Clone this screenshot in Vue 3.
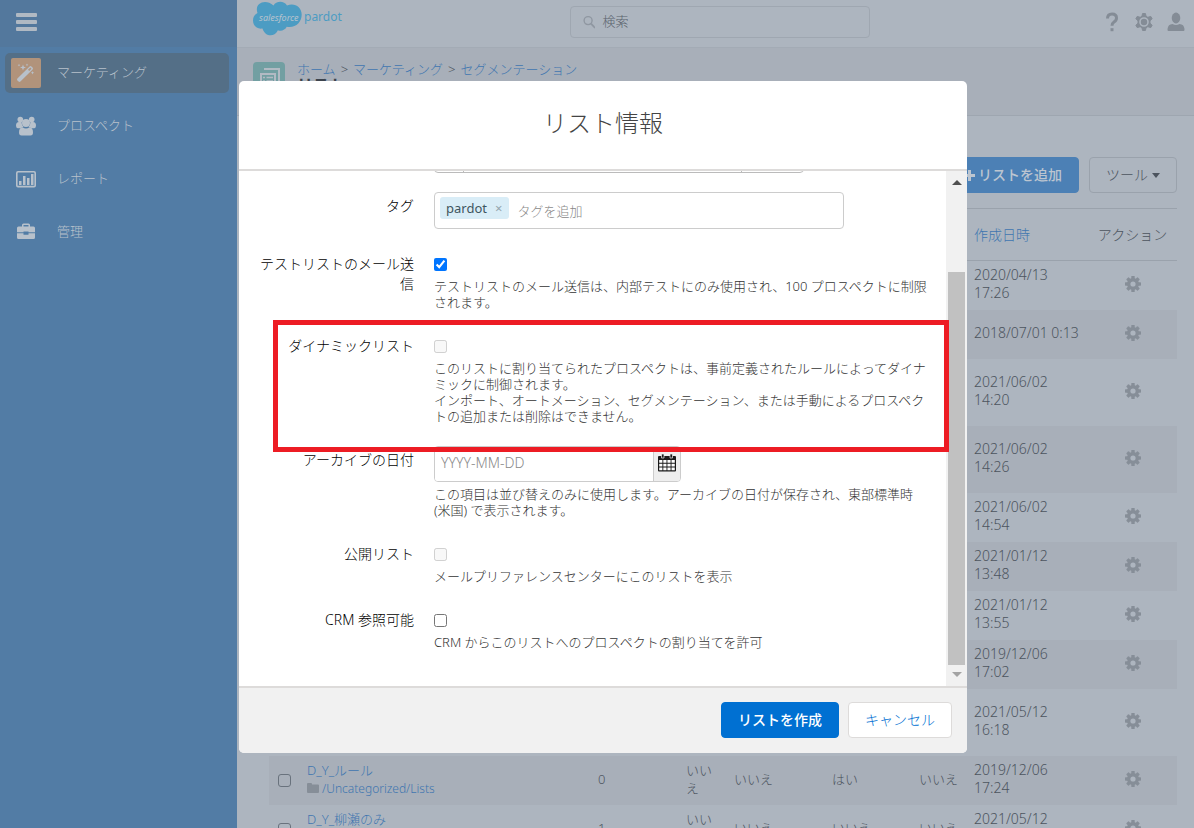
<script setup>
import { ref } from 'vue'

const menu = [
  { icon: 'wand', label: 'マーケティング', active: true },
  { icon: 'people', label: 'プロスペクト' },
  { icon: 'chart', label: 'レポート' },
  { icon: 'case', label: '管理' },
]

const rows = [
  { date: '2020/04/13 17:26' },
  { date: '2018/07/01 0:13' },
  { date: '2021/06/02 14:20', tall: true },
  { date: '2021/06/02 14:26', tall: true },
  { date: '2021/06/02 14:54' },
  { date: '2021/01/12 13:48' },
  { date: '2021/01/12 13:55' },
  { date: '2019/12/06 17:02' },
  { date: '2021/05/12 16:18', tall: true },
  { name: 'D_Y_ルール', count: 0, flags: ['いいえ', 'いいえ', 'はい', 'いいえ'], date: '2019/12/06 17:24' },
  { name: 'D_Y_柳瀬のみ', count: 1, flags: ['いいえ', 'いいえ', 'いいえ', 'いいえ'], date: '2021/05/12 16:20' },
]

const emailTest = ref(true)
const crmVisible = ref(false)
</script>

<template>
  <div class="app">
    <nav class="side">
      <div class="side-top">
        <button class="plain burger" aria-label="メニュー"><i></i><i></i><i></i></button>
      </div>
      <ul class="menu">
        <li v-for="m in menu" :key="m.icon">
          <a href="#" :class="{ active: m.active }">
            <span class="tile">
              <svg v-if="m.icon === 'wand'" width="20" height="20" viewBox="0 0 20 20" fill="currentColor">
                <path d="M1.4 15.6 13.6 3.4q.9-.8 1.8 0l1.2 1.2q.8.9 0 1.8L4.4 18.6q-.9.8-1.8 0l-1.2-1.2q-.8-.9 0-1.8z" />
                <path d="m12 6.8 2.3-2.3 1.2 1.2L13.200 8z" fill="#b1937b" />
                <path d="m7 1.500 .8 2.200 2.200.8-2.200.8L7 7.500l-.8-2.200L4 4.500l2.200-.8zM3 .8l.4 1 1 .4-1 .4-.4 1-.4-1-1-.4 1-.4zM11 .5l.4 1 1 .4-1 .4-.4 1-.4-1-1-.4 1-.4zM16.500 8l.5 1.200 1.200.5-1.200.5-.5 1.200-.5-1.200-1.200-.5 1.200-.5z" />
              </svg>
              <svg v-else-if="m.icon === 'people'" width="20" height="20" viewBox="0 0 20 20" fill="currentColor">
                <circle cx="4.300" cy="3.600" r="2.800" /><circle cx="15.700" cy="3.600" r="2.800" />
                <path d="M0 9.500Q0 6 3 6h2.500q.2 3.600 2 4.900-1.800.2-2.700 1.400H1.600Q0 12 0 9.500zM20 9.500Q20 6 17 6h-2.500q-.2 3.600-2 4.900 1.800.2 2.700 1.400h3.200Q20 12 20 9.500z" />
                <circle cx="10" cy="7" r="4" />
                <path d="M3 16.500q0-5 3.500-5.300Q10 13.600 13.500 11.200q3.500.3 3.500 5.300 0 3-2.500 3h-9q-2.500 0-2.500-3z" />
              </svg>
              <svg v-else-if="m.icon === 'chart'" width="20" height="20" viewBox="0 0 20 20" fill="currentColor">
                <rect x=".8" y="2.800" width="18.400" height="14.800" rx="1.200" fill="none" stroke="currentColor" stroke-width="1.600" />
                <path d="M3 12h2.500v4H3zM7 7h2.500v9H7zM11 9h2.500v7H11zM15 5h2.500v11H15z" />
              </svg>
              <svg v-else width="20" height="20" viewBox="0 0 20 20" fill="currentColor">
                <path d="M6 4.500V3q0-1.500 1.500-1.500h5Q14 1.500 14 3v1.500h3.500Q19 4.500 19 6v4.200h-6.500V9.500h-5v.7H1V6q0-1.500 1.500-1.500zM7.500 3v1.500h5V3z" />
                <path d="M1 11.200h6.500v1.500h5v-1.500H19v4.300q0 1.500-1.500 1.500h-15Q1 17 1 15.500z" />
              </svg>
            </span>
            <span class="name">{{ m.label }}</span>
          </a>
        </li>
      </ul>
    </nav>

    <main class="main">
      <header class="topbar">
        <a href="#" class="brand" aria-label="salesforce pardot">
          <svg width="90" height="38" viewBox="0 0 90 38">
            <path d="M20.500 5.500C23 .8 31 .3 34 5.500c7-3.300 14.700 1.200 14.700 9 0 8-6.500 14-15 12.300-1.500 3.200-5.500 4.800-8.800 3.400C22.500 36.500 12.500 38 9.500 28.500 4 29.500 0 25.500 0 20.500c0-3.400 1.600-6 4.500-7.500C1 3.500 12-1.800 20.500 5.500z" fill="#4c9cc3" />
            <text x="6" y="21" class="cloud-text">salesforce</text>
            <text x="51" y="21" class="pardot-text">pardot</text>
          </svg>
        </a>
        <label class="search">
          <svg width="14" height="14" viewBox="0 0 14 14" fill="none" stroke="#8f97a1" stroke-width="1.500"><circle cx="5.500" cy="5.500" r="4.300" /><path d="m8.600 8.800 4.400 4.500" stroke-width="2" /></svg>
          <input type="text" placeholder="検索" aria-label="検索" />
        </label>
        <div class="tools">
          <button class="plain" aria-label="ヘルプ">
            <svg width="20" height="20" viewBox="0 0 20 20" fill="none" stroke="currentColor" stroke-width="3"><path d="M5.500 6.500Q5.500 2 10 2t4.500 4q0 2.400-2.500 4-2 1.300-2 3.800" /><path d="M8.500 16.200h3v3h-3z" fill="currentColor" stroke="none" /></svg>
          </button>
          <button class="plain" aria-label="設定">
            <svg width="20" height="20" viewBox="0 0 20 20" fill="none" stroke="currentColor"><path d="M8.600 1.500h2.800l.7 2.800 1.700 1 3-.9 1.300 2.300-2.100 2.200v2.200l2.100 2.200-1.300 2.300-3-.9-1.700 1-.7 2.800H8.600l-.7-2.800-1.700-1-3 .9-1.300-2.300L4 11.100V8.900L1.900 6.700l1.300-2.300 3 .9 1.700-1z" stroke-width="1" fill="currentColor" /><circle cx="10" cy="10" r="4" stroke="#adb5bf" stroke-width="1.600" /></svg>
          </button>
          <button class="plain" aria-label="ユーザー">
            <svg width="20" height="20" viewBox="0 0 20 20" fill="currentColor"><ellipse cx="10" cy="6" rx="4.300" ry="5.400" /><path d="M2.300 19q-1-.1-.8-2 .5-4.800 5-5 3.500 1.800 7 0 4.500.2 5 5 .2 1.900-.8 2z" /></svg>
          </button>
        </div>
      </header>

      <section class="page-head">
        <span class="list-icon">
          <svg width="32" height="32" viewBox="0 0 32 32" fill="none" stroke="#b2bac3" stroke-width="2"><path d="M12 8V7h14v16h-2" /><rect x="8" y="12" width="14" height="14" /><path d="M10 15.500h2m1.500 0H20M10 19h2m1.500 0H20M10 22.500h2m1.500 0H20" stroke-width="1.500" /></svg>
        </span>
        <div>
          <p class="crumbs"><a href="#">ホーム</a><span>&gt;</span><a href="#">マーケティング</a><span>&gt;</span><a href="#">セグメンテーション</a></p>
          <h1>リスト</h1>
        </div>
      </section>

      <section class="content">
        <div class="actions">
          <button class="add">
            <svg width="11" height="11" viewBox="0 0 11 11" fill="currentColor"><path d="M4 0h3v4h4v3H7v4H4V7H0V4h4z" /></svg>リストを追加
          </button>
          <button class="tool">ツール<i class="caret"></i></button>
        </div>
        <table>
          <colgroup>
            <col class="c-check" /><col /><col class="c-count" /><col class="c-a" /><col class="c-b" /><col class="c-c" /><col class="c-d" /><col class="c-date" /><col class="c-act" />
          </colgroup>
          <thead>
            <tr><th colspan="7"></th><th><a href="#">作成日時</a></th><th class="act">アクション</th></tr>
          </thead>
          <tbody>
            <tr v-for="(r, i) in rows" :key="i" :class="{ tall: r.tall }">
              <td class="check"><input type="checkbox" aria-label="行を選択" /></td>
              <td>
                <template v-if="r.name">
                  <a href="#">{{ r.name }}</a><br />
                  <a href="#" class="path"><svg width="12" height="10" viewBox="0 0 12 10" fill="#868e98"><path d="M0 1q0-1 1-1h3q1 0 1 1v.5h6q1 0 1 1V9q0 1-1 1H1Q0 10 0 9z" /></svg> /Uncategorized/Lists</a>
                </template>
              </td>
              <td>{{ r.count }}</td>
              <td v-for="n in 4" :key="n">{{ r.flags ? r.flags[n - 1] : '' }}</td>
              <td class="date">{{ r.date }}</td>
              <td class="act">
                <button class="plain gear" aria-label="アクション">
                  <svg width="16" height="16" viewBox="0 0 16 16"><g fill="currentColor"><circle cx="8" cy="8" r="6" /><rect v-for="a in 4" :key="a" x="6.300" y="0" width="3.400" height="16" rx=".6" :transform="`rotate(${a * 45} 8 8)`" /></g><circle class="hub" cx="8" cy="8" r="2.600" /></svg>
                </button>
              </td>
            </tr>
          </tbody>
        </table>
      </section>
    </main>

    <div class="overlay">
      <div class="modal" role="dialog" aria-labelledby="dlg-title">
        <header class="modal-head"><h2 id="dlg-title">リスト情報</h2></header>
        <div class="modal-body">
          <form class="form" @submit.prevent>
            <div class="row folder-row">
              <span></span>
              <div class="folder"><span></span><input type="text" aria-label="フォルダー" /><button type="button" aria-label="選択"></button></div>
            </div>
            <div class="row boxed tag-row">
              <label for="tag">タグ</label>
              <div class="tags">
                <span class="tag">pardot<button type="button" class="plain" aria-label="削除">×</button></span>
                <input id="tag" type="text" placeholder="タグを追加" />
              </div>
            </div>
            <div class="row">
              <label for="test">テストリストのメール送信</label>
              <div>
                <div class="tick"><input id="test" v-model="emailTest" type="checkbox" /></div>
                <p>テストリストのメール送信は、内部テストにのみ使用され、100 プロスペクトに制限<br />されます。</p>
              </div>
            </div>
            <div class="row">
              <label for="dyn">ダイナミックリスト</label>
              <div>
                <div class="tick"><input id="dyn" type="checkbox" disabled /></div>
                <p>このリストに割り当てられたプロスペクトは、事前定義されたルールによってダイナ<br />ミックに制御されます。<br />インポート、オートメーション、セグメンテーション、または手動によるプロスペク<br />トの追加または削除はできません。</p>
              </div>
            </div>
            <div class="row boxed archive">
              <label for="arch">アーカイブの日付</label>
              <div>
                <div class="date-box">
                  <input id="arch" type="text" placeholder="YYYY-MM-DD" />
                  <button type="button" aria-label="カレンダー">
                    <svg width="18" height="18" viewBox="0 0 18 18"><rect x="0" y="2" width="18" height="15.500" rx="1" fill="#1a1a1a" /><path d="M3.500 0H6v4H3.500zM12 0h2.500v4H12z" fill="#1a1a1a" stroke="#eee" stroke-width=".7" /><path d="M1.200 6h3.200v2.800H1.200zm4.100 0h3.200v2.800H5.300zm4.100 0h3.200v2.800H9.400zm4.100 0h3.300v2.800h-3.300zM1.200 9.700h3.200v2.800H1.200zm4.100 0h3.200v2.800H5.300zm4.100 0h3.200v2.800H9.400zm4.100 0h3.300v2.800h-3.300zM1.200 13.400h3.200v2.900H1.200zm4.100 0h3.200v2.900H5.300zm4.100 0h3.200v2.900H9.400zm4.100 0h3.300v2.900h-3.300z" fill="#fff" /></svg>
                  </button>
                </div>
                <p>この項目は並び替えのみに使用します。アーカイブの日付が保存され、東部標準時<br />(米国) で表示されます。</p>
              </div>
            </div>
            <div class="row">
              <label for="pub">公開リスト</label>
              <div>
                <div class="tick"><input id="pub" type="checkbox" disabled /></div>
                <p>メールプリファレンスセンターにこのリストを表示</p>
              </div>
            </div>
            <div class="row">
              <label for="crm">CRM 参照可能</label>
              <div>
                <div class="tick"><input id="crm" v-model="crmVisible" type="checkbox" /></div>
                <p>CRM からこのリストへのプロスペクトの割り当てを許可</p>
              </div>
            </div>
          </form>
          <div class="scroll">
            <i class="up"></i>
            <div class="track"><div class="thumb"></div></div>
            <i class="down"></i>
          </div>
        </div>
        <footer class="modal-foot">
          <button class="create">リストを作成</button>
          <button class="cancel">キャンセル</button>
        </footer>
        <div class="callout"></div>
      </div>
    </div>
  </div>
</template>

<style>
body {
  margin: 0;
  overflow: hidden;
}
</style>

<style scoped>
.app {
  position: relative;
  display: grid;
  grid-template-columns: 237px minmax(0, 1fr);
  height: 100vh;
  overflow: hidden;
  background: #adb5bf;
  color: #4c545e;
  font: 300 13px/18px "Noto Sans", "Noto Sans CJK JP", sans-serif;
}
*,
*::before {
  box-sizing: border-box;
}
button,
input {
  font: inherit;
  color: inherit;
}
a {
  color: #4076b0;
  text-decoration: none;
}
p,
h1,
h2,
ul {
  margin: 0;
  padding: 0;
}
svg {
  display: block;
}
.plain {
  padding: 0;
  border: 0;
  background: none;
}

/* sidebar */
.side {
  background: #527ca5;
}
.side-top {
  height: 47px;
  padding: 13px 16px;
  background: #53789d;
}
.burger {
  display: grid;
  gap: 3px;
  width: 21px;
}
.burger i {
  height: 4px;
  border-radius: 1px;
  background: #b0b9c3;
}
.menu {
  display: grid;
  gap: 13px;
  padding: 6px 8px 0 5px;
  list-style: none;
}
.menu a {
  display: flex;
  align-items: center;
  gap: 16px;
  height: 40px;
  padding: 0 6px;
  border-radius: 5px;
  color: #b8c1cb;
}
.menu a.active {
  background: #546f87;
}
.name {
  padding-bottom: 2px;
}
.tile {
  display: grid;
  place-items: center;
  width: 30px;
  height: 30px;
  border-radius: 2px;
}
.active .tile {
  background: #b1937b;
}

/* main area */
.main {
  overflow: hidden;
}
.topbar {
  display: grid;
  grid-template-columns: 1fr 300px 1fr;
  align-items: center;
  height: 47px;
  padding: 0 8px 3px 16px;
}
.brand {
  align-self: start;
}
.cloud-text {
  font: italic 9px "Noto Sans", sans-serif;
  fill: #b7c3ce;
}
.pardot-text {
  font: 12px "Noto Sans", sans-serif;
  fill: #4c9cc3;
}
.search {
  display: flex;
  align-items: center;
  gap: 7px;
  height: 32px;
  padding: 0 12px;
  border: 1px solid #9fa7b1;
  border-radius: 4px;
}
.search input {
  width: 100%;
  min-width: 0;
  padding: 0 0 2px;
  border: 0;
  outline: 0;
  background: none;
}
.search input::placeholder {
  color: #59626c;
  opacity: 1;
}
.tools {
  display: flex;
  justify-content: flex-end;
  gap: 12px;
  color: #848c96;
}
.page-head {
  display: flex;
  gap: 12px;
  height: 69px;
  padding: 14px 16px 0;
  border-top: 1px solid #a3abb5;
  border-bottom: 1px solid #9ea6b0;
  background: #a8afb9;
}
.list-icon {
  height: 32px;
  border-radius: 4px;
  background: #729fa2;
}
.crumbs {
  line-height: 14px;
}
.crumbs span {
  padding: 0 5px;
}
h1 {
  font-size: 16px;
  line-height: 18px;
  color: #3c434c;
}
.content {
  padding: 41px 17px 0 32px;
}
.actions {
  display: flex;
  justify-content: flex-end;
  gap: 10px;
  margin-bottom: 15px;
  font-size: 14px;
}
.actions button {
  display: flex;
  align-items: center;
  height: 36px;
  padding: 0 16px;
  border: 1px solid #9aa2ac;
  border-radius: 4px;
  background: none;
}
.actions .add {
  gap: 3px;
  border-color: #4c80b5;
  background: #4c80b5;
  color: #bcc5d0;
  font-weight: 500;
}
.actions .tool {
  gap: 4px;
}
.caret {
  border: 4px solid transparent;
  border-top: 5px solid #4c545e;
  border-bottom: 0;
}
table {
  width: 100%;
  table-layout: fixed;
  border-collapse: separate;
  border-spacing: 0;
  border-top: 1px solid #9aa2ac;
}
.c-check { width: 30px; }
.c-count { width: 88px; }
.c-a { width: 48px; }
.c-b { width: 98px; }
.c-c { width: 87px; }
.c-d { width: 55px; }
.c-date { width: 122px; }
.c-act { width: 89px; }
th {
  height: 52px;
  padding: 0 8px;
  border-bottom: 1px solid #9aa2ac;
  font-size: 14px;
  font-weight: inherit;
  text-align: left;
}
td {
  height: 49px;
  padding: 0 4px 3px 8px;
}
.tall td {
  height: 67px;
}
tbody tr:nth-child(even) {
  background: #a8afb9;
}
td.check,
.act {
  padding-bottom: 0;
}
.check input {
  display: block;
  width: 13px;
  height: 13px;
  margin: 0 0 0 1px;
  border: 1px solid #69727d;
  border-radius: 3px;
  appearance: none;
}
.path {
  font-size: 12px;
}
.path svg {
  display: inline-block;
}
.date {
  font-size: 14px;
}
.act {
  padding: 0;
  text-align: center;
}
.gear {
  color: #868e98;
}
.hub {
  fill: #adb5bf;
}

/* dialog */
.overlay {
  position: absolute;
  inset: 0;
  display: flex;
  padding: 81px 227px 75px 239px;
}
.modal {
  position: relative;
  display: flex;
  flex: 1;
  flex-direction: column;
  min-width: 0;
  border-radius: 5px;
  background: #fff;
}
.modal-head {
  height: 90px;
  border-bottom: 2px solid #dddbda;
  text-align: center;
}
h2 {
  font-size: 24px;
  font-weight: inherit;
  line-height: 84px;
  color: #444;
}
.modal-body {
  display: flex;
  flex: 1;
  min-height: 0;
}
.form {
  display: flex;
  flex: 1;
  flex-direction: column;
  justify-content: flex-end;
  gap: 26px;
  padding: 0 16px 36px 20px;
  overflow: hidden;
  color: #333;
}
.row {
  display: grid;
  grid-template-columns: 155px minmax(0, 1fr);
  gap: 20px;
}
.row > label {
  font-size: 14px;
  line-height: 20px;
  text-align: right;
  color: #000;
}
.row p {
  line-height: 16px;
  white-space: nowrap;
}
.boxed > label {
  padding-top: 4px;
}
.tag-row {
  margin-bottom: -1px;
}
.archive {
  margin-top: -4px;
}
.tick {
  display: flex;
  align-items: center;
  height: 24px;
  padding-bottom: 4px;
}
.tick input {
  width: 13px;
  height: 13px;
  margin: 0;
}
.folder-row {
  margin-bottom: -7px;
}
.folder {
  display: grid;
  grid-template-columns: 28px 1fr 62px;
  width: 370px;
  height: 36px;
  border: 1px solid #bbb;
  border-radius: 4px;
}
.folder input,
.folder button {
  min-width: 0;
  border: 0;
  border-left: 1px solid #bbb;
  background: none;
}
.tags {
  display: flex;
  align-items: center;
  gap: 8px;
  width: 410px;
  height: 37px;
  padding: 0 5px;
  border: 1px solid #ccc;
  border-radius: 4px;
}
.tag {
  display: flex;
  align-items: center;
  align-self: flex-start;
  gap: 8px;
  height: 22px;
  margin-top: 4px;
  padding: 0 7px 0 6px;
  border-radius: 3px;
  background: #d9edf7;
  color: #3e5560;
  font-weight: 400;
}
.tag button {
  height: 22px;
  color: #95a5ad;
}
.tags input {
  flex: 1;
  min-width: 0;
  padding: 0;
  border: 0;
  outline: 0;
}
::placeholder {
  color: #888;
  opacity: 1;
}
.date-box {
  display: flex;
  width: 247px;
  height: 36px;
  margin-bottom: 4px;
  border: 1px solid #ccc;
  border-radius: 4px;
  overflow: hidden;
}
.date-box input {
  flex: 1;
  min-width: 0;
  padding: 0 6px 2px;
  border: 0;
  outline: 0;
  font-size: 14px;
}
.date-box button {
  width: 27px;
  padding: 0 4px 2px;
  border: 0;
  border-left: 1px solid #ccc;
  background: #eee;
}
.scroll {
  display: flex;
  flex-direction: column;
  align-items: center;
  width: 21px;
  padding: 9px 2px;
  background: #f1f1f1;
}
.up,
.down {
  border: 5px solid transparent;
}
.up {
  border-top: 0;
  border-bottom-color: #505050;
}
.down {
  border-bottom: 0;
  border-top-color: #a3a3a3;
}
.track {
  display: flex;
  flex: 1;
  flex-direction: column;
  justify-content: flex-end;
  align-self: stretch;
  padding: 6px 0 7px;
}
.thumb {
  height: 83%;
  background: #c1c1c1;
}
.modal-foot {
  display: flex;
  justify-content: flex-end;
  gap: 9px;
  height: 67px;
  padding: 14px 15px;
  border-top: 2px solid #dddbda;
  border-radius: 0 0 5px 5px;
  background: #f1f1f1;
}
.modal-foot button {
  height: 36px;
  padding: 0 16px;
  border: 1px solid #0070d2;
  border-radius: 4px;
  font-size: 14px;
}
.modal-foot .create {
  background: #0070d2;
  color: #fff;
  font-weight: 500;
}
.modal-foot .cancel {
  border-color: #dddbda;
  background: #fff;
  color: #0070d2;
}
.callout {
  position: absolute;
  right: 18px;
  bottom: 301px;
  left: 34px;
  height: 132px;
  border: 5px solid #ed1c24;
  pointer-events: none;
}
</style>
